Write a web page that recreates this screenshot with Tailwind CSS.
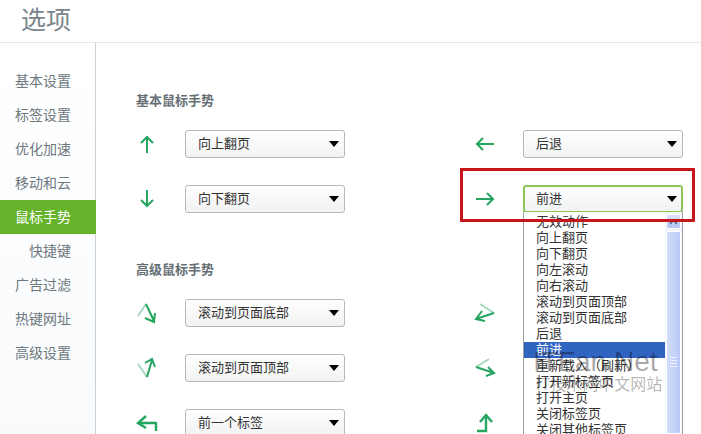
<!DOCTYPE html>
<html lang="zh-CN">
<head>
    <meta charset="UTF-8">
    <title>选项</title>
    <script src="https://cdn.jsdelivr.net/npm/@tailwindcss/browser@4"></script>
</head>
<body class="w-[701px] h-[434px] overflow-hidden bg-white relative font-['Liberation_Sans','Noto_Sans_CJK_SC',sans-serif] text-[13px] text-[#333]">
    <header class="h-[43px] border-b border-[#e6e8e9] pl-[21px] text-[25px] leading-[40px] text-[#7a868b]">选项</header>

    <div class="flex h-[391px]">
        <nav class="w-[96px] shrink-0 pt-[21px] border-r border-[#cdd0d2] bg-gradient-to-b from-white to-[#f8fafc] text-[#6c787e] text-[14px]">
            <div class="h-[34px] leading-[34px] pl-[15px]">基本设置</div>
            <div class="h-[34px] leading-[34px] pl-[15px]">标签设置</div>
            <div class="h-[34px] leading-[34px] pl-[15px]">优化加速</div>
            <div class="h-[34px] leading-[34px] pl-[15px]">移动和云</div>
            <div class="h-[34px] leading-[34px] pl-[15px] -mr-px bg-[#64b32b] text-white">鼠标手势</div>
            <div class="h-[34px] leading-[34px] pl-[29px]">快捷键</div>
            <div class="h-[34px] leading-[34px] pl-[15px]">广告过滤</div>
            <div class="h-[34px] leading-[34px] pl-[15px]">热键网址</div>
            <div class="h-[34px] leading-[34px] pl-[15px]">高级设置</div>
        </nav>

        <main class="flex-1 pl-[40px] pt-[48px]">
            <h2 class="h-[20px] leading-[20px] font-bold text-[#666f74]">基本鼠标手势</h2>
            <div class="grid grid-cols-[387px_160px] gap-y-[27px] mt-[19px]">
                <div class="flex items-center">
                    <svg class="w-[22px] h-[22px] mr-[27px]" viewBox="0 0 22 22" fill="none" stroke="#25a55f" stroke-width="2"><path d="M11 20V4M5 10l6-6 6 6"/></svg>
                    <div class="w-[160px] h-[28px] flex items-center justify-between pl-[12px] pr-[5px] border border-[#b5b9bb] rounded-[3px] bg-gradient-to-b from-white to-[#f1f2f2]">向上翻页<span class="w-0 h-0 border-x-[5px] border-x-transparent border-t-[6px] border-t-black"></span></div>
                </div>
                <div class="flex items-center relative">
                    <svg class="absolute left-[-49px] w-[22px] h-[22px]" viewBox="0 0 22 22" fill="none" stroke="#25a55f" stroke-width="2"><path d="M20 11H3M9 5l-6 6 6 6"/></svg>
                    <div class="w-[160px] h-[28px] flex items-center justify-between pl-[12px] pr-[5px] border border-[#b5b9bb] rounded-[3px] bg-gradient-to-b from-white to-[#f1f2f2]">后退<span class="w-0 h-0 border-x-[5px] border-x-transparent border-t-[6px] border-t-black"></span></div>
                </div>
                <div class="flex items-center">
                    <svg class="w-[22px] h-[22px] mr-[27px]" viewBox="0 0 22 22" fill="none" stroke="#25a55f" stroke-width="2"><path d="M11 2v16M5 12l6 6 6-6"/></svg>
                    <div class="w-[160px] h-[28px] flex items-center justify-between pl-[12px] pr-[5px] border border-[#b5b9bb] rounded-[3px] bg-gradient-to-b from-white to-[#f1f2f2]">向下翻页<span class="w-0 h-0 border-x-[5px] border-x-transparent border-t-[6px] border-t-black"></span></div>
                </div>
                <div class="flex items-center relative">
                    <svg class="absolute left-[-49px] w-[22px] h-[22px]" viewBox="0 0 22 22" fill="none" stroke="#25a55f" stroke-width="2"><path d="M2 11h17M13 5l6 6-6 6"/></svg>
                    <div class="w-[160px] h-[28px] flex items-center justify-between pl-[11px] pr-[4px] border-2 border-[#8cc75c] rounded-[3px] bg-gradient-to-b from-white to-[#f1f2f2]">前进<span class="w-0 h-0 border-x-[5px] border-x-transparent border-t-[6px] border-t-black"></span></div>
                </div>
            </div>

            <h2 class="h-[20px] leading-[20px] font-bold text-[#666f74] mt-[47px]">高级鼠标手势</h2>
            <div class="grid grid-cols-[387px_160px] gap-y-[27px] mt-[19px]">
                <div class="flex items-center">
                    <svg class="w-[22px] h-[22px] mr-[27px]" viewBox="0 0 22 22" fill="none" stroke-width="2"><path d="M2 14 10 2" stroke="#a5d8bc"/><path d="M10 2l8 17M9 16l9 4 1-9" stroke="#25a55f"/></svg>
                    <div class="w-[160px] h-[28px] flex items-center justify-between pl-[12px] pr-[5px] border border-[#b5b9bb] rounded-[3px] bg-gradient-to-b from-white to-[#f1f2f2]">滚动到页面底部<span class="w-0 h-0 border-x-[5px] border-x-transparent border-t-[6px] border-t-black"></span></div>
                </div>
                <div class="flex items-center relative">
                    <svg class="absolute left-[-49px] w-[22px] h-[22px]" viewBox="0 0 22 22" fill="none" stroke-width="2"><path d="M6 2l14 9" stroke="#a5d8bc"/><path d="M20 11 2 17M8 9l-6 8 9 2" stroke="#25a55f"/></svg>
                    <div class="w-[160px] h-[28px] border border-[#b5b9bb] rounded-[3px] bg-gradient-to-b from-white to-[#f1f2f2]"></div>
                </div>
                <div class="flex items-center">
                    <svg class="w-[22px] h-[22px] mr-[27px]" viewBox="0 0 22 22" fill="none" stroke-width="2"><path d="M2 7l9 13" stroke="#a5d8bc"/><path d="M11 20 16 3M9 6l7-4 3 8" stroke="#25a55f"/></svg>
                    <div class="w-[160px] h-[28px] flex items-center justify-between pl-[12px] pr-[5px] border border-[#b5b9bb] rounded-[3px] bg-gradient-to-b from-white to-[#f1f2f2]">滚动到页面顶部<span class="w-0 h-0 border-x-[5px] border-x-transparent border-t-[6px] border-t-black"></span></div>
                </div>
                <div class="flex items-center relative">
                    <svg class="absolute left-[-49px] w-[22px] h-[22px]" viewBox="0 0 22 22" fill="none" stroke-width="2"><path d="M15 2 2 10" stroke="#a5d8bc"/><path d="M2 10l18 6M14 10l6 6-8 3" stroke="#25a55f"/></svg>
                    <div class="w-[160px] h-[28px] border border-[#b5b9bb] rounded-[3px] bg-gradient-to-b from-white to-[#f1f2f2]"></div>
                </div>
                <div class="flex items-center">
                    <svg class="w-[22px] h-[22px] mr-[27px]" viewBox="0 0 22 22" fill="none" stroke="#25a55f" stroke-width="2.4"><path d="M20 19v-8H2M10 4l-8 7 8 5"/></svg>
                    <div class="w-[160px] h-[28px] flex items-center justify-between pl-[12px] pr-[5px] border border-[#b5b9bb] rounded-[3px] bg-gradient-to-b from-white to-[#f1f2f2]">前一个标签<span class="w-0 h-0 border-x-[5px] border-x-transparent border-t-[6px] border-t-black"></span></div>
                </div>
                <div class="flex items-center relative">
                    <svg class="absolute left-[-49px] w-[22px] h-[22px]" viewBox="0 0 22 22" fill="none" stroke="#25a55f" stroke-width="2.4"><path d="M3 19h9V3M6 10l6-7 6 7"/></svg>
                    <div class="w-[160px] h-[28px] border border-[#b5b9bb] rounded-[3px] bg-gradient-to-b from-white to-[#f1f2f2]"></div>
                </div>
            </div>
        </main>
    </div>

    <!-- open dropdown of the 前进 select -->
    <div class="absolute left-[523px] top-[212px] w-[160px] h-[222px] flex border-x border-[#9aa0a4] bg-white text-[13px] leading-[16px] overflow-hidden">
        <ul class="flex-1 pt-[2px]">
            <li class="pl-[12px]">无效动作</li>
            <li class="pl-[12px]">向上翻页</li>
            <li class="pl-[12px]">向下翻页</li>
            <li class="pl-[12px]">向左滚动</li>
            <li class="pl-[12px]">向右滚动</li>
            <li class="pl-[12px]">滚动到页面顶部</li>
            <li class="pl-[12px]">滚动到页面底部</li>
            <li class="pl-[12px]">后退</li>
            <li class="pl-[12px] bg-[#3163c0] text-white">前进</li>
            <li class="pl-[12px]">重新载入（刷新）</li>
            <li class="pl-[12px]">打开新标签页</li>
            <li class="pl-[12px]">打开主页</li>
            <li class="pl-[12px]">关闭标签页</li>
            <li class="pl-[12px]">关闭其他标签页</li>
        </ul>
        <!-- scrollbar -->
        <div class="w-[17px] flex flex-col gap-[2px] pl-[1px] pr-px pt-[2px] bg-[#f3f5fd]">
            <div class="h-[15px] shrink-0 flex items-center justify-center rounded-[2px] border border-white bg-gradient-to-b from-[#dbe4fc] to-[#b6c6f3]">
                <svg class="w-[9px] h-[6px]" viewBox="0 0 9 6" fill="none" stroke="#4d6185" stroke-width="1.6"><path d="M1 5l3.5-3.5L8 5"/></svg>
            </div>
            <div class="flex-1 flex flex-col items-center gap-[2px] pt-[125px] rounded-[2px] border border-white bg-gradient-to-r from-[#d3defc] to-[#b9c9f6]">
                <span class="w-[7px] h-px bg-[#eef2fe]"></span>
                <span class="w-[7px] h-px bg-[#eef2fe]"></span>
                <span class="w-[7px] h-px bg-[#eef2fe]"></span>
                <span class="w-[7px] h-px bg-[#eef2fe]"></span>
            </div>
        </div>
    </div>

    <div class="absolute left-[460px] top-[168px] w-[235px] h-[54px] border-[3px] border-[#c5161b]"></div>
    <!-- site watermark over the screenshot -->
    <div class="absolute left-[533px] top-[345px] text-[28px] leading-[34px] text-black/35">ITFan.Net</div>
    <div class="absolute left-[536px] top-[375px] text-[16px] leading-[20px] text-black/30">IT技术网中文网站</div>
</body>
</html>
